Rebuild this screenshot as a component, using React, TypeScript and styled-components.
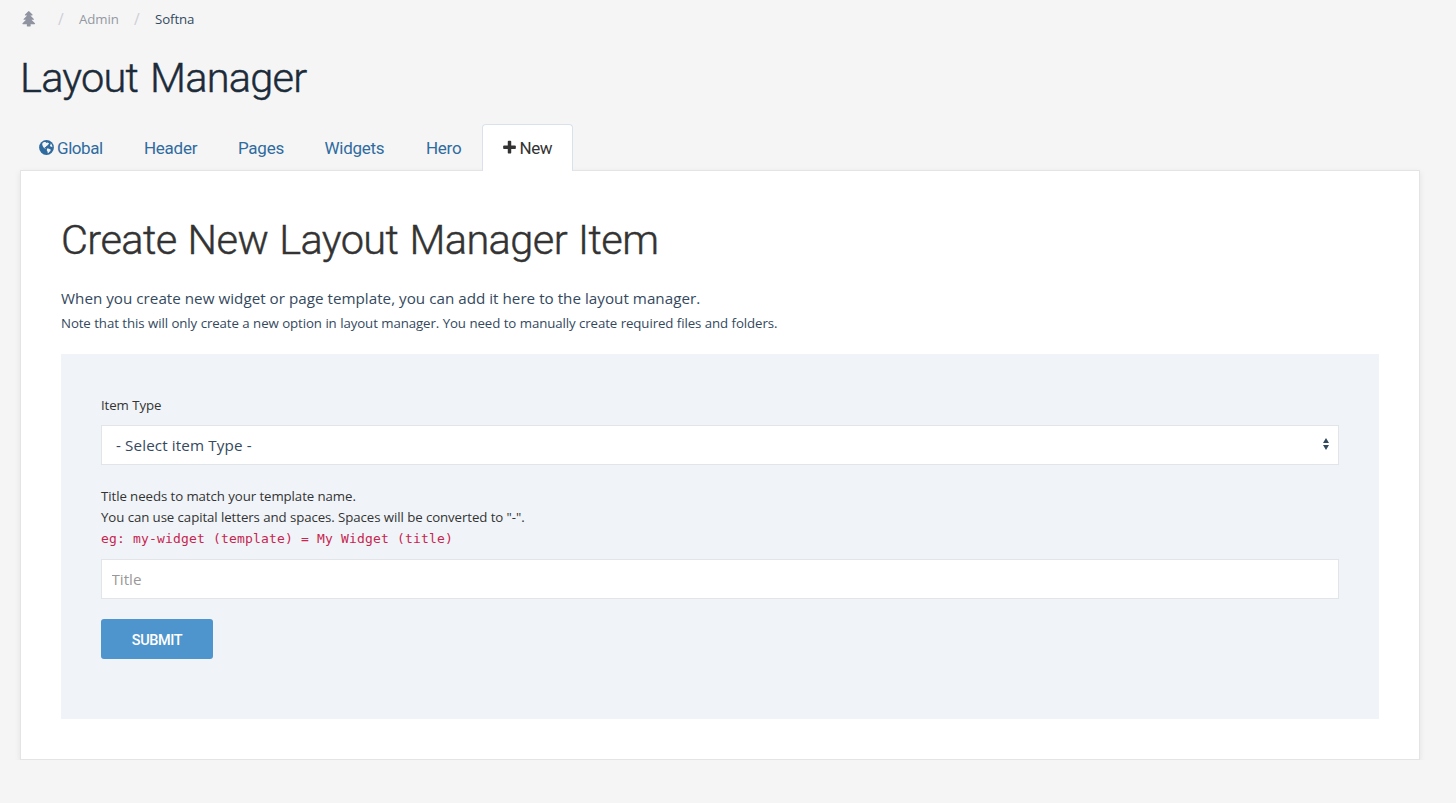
import styled, { createGlobalStyle } from "styled-components";

const bodyFont = '"Open Sans", "Noto Sans", sans-serif';
const headFont = 'Roboto, "Liberation Sans", sans-serif';

const GlobalStyle = createGlobalStyle`
  * { box-sizing: border-box; }
  html { background: #f5f5f5; }
  body { margin: 0; font-family: ${bodyFont}; font-size: 15.2px; color: #34495e; }
`;

const Page = styled.main`
  width: 1420px;
  padding: 9px 0 0 20px;
`;

const Breadcrumb = styled.nav`
  display: flex;
  height: 20px;
  line-height: 20px;
  font-size: 13.25px;
`;

const Crumb = styled.span<{ $current?: boolean; $width: number }>`
  width: ${(p) => p.$width}px;
  color: ${(p) => (p.$current ? "#34495e" : "#9498a3")};
  letter-spacing: -0.1px;
  white-space: nowrap;
`;

const Slash = styled.span`
  width: 21px;
  font-size: 15.5px;
  color: #cdd0d6;
`;

const TreeIcon = styled.svg`
  display: block;
  width: 15.5px;
  height: 15.5px;
  margin: 2px 0 0 0.7px;
  fill: #9093a0;
`;

const PageTitle = styled.h1`
  margin: 24px 0 21px;
  font: 300 41.5px/50px ${headFont};
  -webkit-text-stroke: 0.45px currentColor;
  letter-spacing: -0.75px;
  word-spacing: 2.5px;
  color: #1c2b39;
`;

const Tabs = styled.div`
  display: flex;
  height: 46px;
  margin-left: -1px;
`;

const Tab = styled.a<{ $width: number; $active?: boolean; $tight?: boolean }>`
  display: flex;
  align-items: center;
  gap: 3px;
  width: ${(p) => p.$width}px;
  height: ${(p) => (p.$active ? 47 : 46)}px;
  padding: 0 0 ${(p) => (p.$active ? 1 : 0)}px ${(p) => (p.$active ? 18.5 : p.$tight ? 19 : 20)}px;
  border: 1px solid ${(p) => (p.$active ? "#d9e2ec" : "transparent")};
  border-bottom: 0;
  border-radius: 4px 4px 0 0;
  background: ${(p) => (p.$active ? "#fff" : "transparent")};
  color: ${(p) => (p.$active ? "#333" : "#2f6b9f")};
  font: 400 17px/44px ${headFont};
  letter-spacing: ${(p) => (p.$active || p.$tight ? -0.45 : -0.26)}px;
  white-space: nowrap;
  position: relative;
`;

const TabIcon = styled.svg`
  flex: none;
  width: 15px;
  height: 15px;
  fill: currentColor;
`;

const Panel = styled.section`
  width: 1400px;
  height: 590px;
  padding: 39px 40px 40px;
  border: 1px solid #e4e4e5;
  background: #fff;
  box-shadow: 0 2px 6px rgba(0, 0, 0, 0.08);
`;

const PanelTitle = styled.h2`
  margin: 0 0 16px;
  font: 300 41.5px/60px ${headFont};
  -webkit-text-stroke: 0.45px currentColor;
  letter-spacing: -0.58px;
  word-spacing: 1.5px;
  color: #333;
`;

const Lead = styled.p`
  margin: 0;
  line-height: 24px;
  letter-spacing: 0.02px;
`;

const Note = styled.p`
  margin: 0 0 18px;
  font-size: 13.25px;
  line-height: 26px;
  letter-spacing: -0.1px;
  word-spacing: 0.2px;
`;

const Form = styled.form`
  display: flex;
  flex-direction: column;
  align-items: stretch;
  height: 365px;
  padding: 40px;
  background: #f0f3f8;
`;

const Label = styled.label`
  margin-bottom: 9px;
  font-size: 13.25px;
  line-height: 22px;
  letter-spacing: -0.08px;
  color: #333;
`;

const SelectBox = styled.div`
  display: flex;
  align-items: center;
  justify-content: space-between;
  height: 40px;
  margin-bottom: 21px;
  padding-left: 14px;
  border: 1px solid #e3e4e7;
  background: #fff;
  line-height: 38px;
  letter-spacing: 0.13px;
`;

const Arrows = styled.svg`
  width: 24px;
  height: 16px;
  fill: #34495e;
`;

const Help = styled.div`
  margin-bottom: 10px;
  font-size: 13.25px;
  line-height: 21px;
  letter-spacing: -0.08px;
  color: #333;
`;

const Example = styled.code`
  display: block;
  height: 21px;
  font: 13px/21px "DejaVu Sans Mono", monospace;
  letter-spacing: 0.174px;
  color: #c7254e;
`;

const TextInput = styled.input`
  height: 40px;
  padding: 0 9.5px;
  border: 1px solid #e3e4e7;
  border-radius: 0;
  background: #fff;
  font: 15.2px ${bodyFont};
  color: #34495e;
  &::placeholder { color: #999; opacity: 1; }
`;

const Submit = styled.button`
  align-self: flex-start;
  width: 112px;
  height: 40px;
  margin-top: 20px;
  padding: 2px 0 0;
  border: 0;
  border-radius: 3px;
  background: #4f95cd;
  color: #fff;
  font: 500 14.5px/40px ${headFont};
  letter-spacing: -0.4px;
`;

const Tree = () => (
  <TreeIcon viewBox="0 0 1792 1792">
    <path d="M1504 1472q0 26-19 45t-45 19h-462q1 17 6 87.500t5 108.500q0 25-18 42.500t-43 17.500h-320q-25 0-43-17.500t-18-42.500q0-38 5-108.500t6-87.500h-462q-26 0-45-19t-19-45 19-45l402-403h-229q-26 0-45-19t-19-45 19-45l402-403h-197q-26 0-45-19t-19-45 19-45l384-384q19-19 45-19t45 19l384 384q19 19 19 45t-19 45-45 19h-197l402 403q19 19 19 45t-19 45-45 19h-229l402 403q19 19 19 45z" transform="translate(128 0)" />
  </TreeIcon>
);

const Globe = () => (
  <TabIcon viewBox="0 0 15 15">
    <circle cx="7.5" cy="7.5" r="7.4" />
    <path
      fill="#f5f5f5"
      d="M3.500 3 5 1.900l1.600.2.6.9 1-.6 1.300.5.6.9-.9.8-.8 1-1.200.7-.4.8-1-.2-.2.7.8.5.3.6-.8-.2-1.300-1.100-.9-1.500-.5-1.300zM8 8.600l1.300-.2 1.200.7 1.200.5-.3 1.300-1.200 1.100-.7 1.100-.7.1-.3-1.600-.7-1.200zM11.400 3.600l1 .4.8 1.700.2 1.500-.9-.4-1-.2-.6-1.100.7-.8z"
    />
  </TabIcon>
);

const Plus = () => (
  <TabIcon viewBox="64 32 1664 1664">
    <path d="M1600 736v192q0 40-28 68t-68 28h-416v416q0 40-28 68t-68 28h-192q-40 0-68-28t-28-68v-416h-416q-40 0-68-28t-28-68v-192q0-40 28-68t68-28h416v-416q0-40 28-68t68-28h192q40 0 68 28t28 68v416h416q40 0 68 28t28 68z" />
  </TabIcon>
);

export default function App() {
  return (
    <>
      <GlobalStyle />
      <Page>
        <Breadcrumb>
          <Crumb $width={38}><Tree /></Crumb>
          <Slash>/</Slash>
          <Crumb $width={55}>Admin</Crumb>
          <Slash>/</Slash>
          <Crumb $width={60} $current>Softna</Crumb>
        </Breadcrumb>
        <PageTitle>Layout Manager</PageTitle>
        <Tabs>
          <Tab $width={104} $tight><Globe />Global</Tab>
          <Tab $width={94}>Header</Tab>
          <Tab $width={86.5}>Pages</Tab>
          <Tab $width={101.5}>Widgets</Tab>
          <Tab $width={77}>Hero</Tab>
          <Tab $width={91} $active><Plus />New</Tab>
        </Tabs>
        <Panel>
          <PanelTitle>Create New Layout Manager Item</PanelTitle>
          <Lead>When you create new widget or page template, you can add it here to the layout manager.</Lead>
          <Note>Note that this will only create a new option in layout manager. You need to manually create required files and folders.</Note>
          <Form>
            <Label>Item Type</Label>
            <SelectBox>
              - Select item Type -
              <Arrows viewBox="0 0 24 16">
                <path d="M12 1 9 6h6zM12 13 9 8h6z" />
              </Arrows>
            </SelectBox>
            <Help>
              Title needs to match your template name.
              <br />
              You can use capital letters and spaces. Spaces will be converted to "-".
              <Example>eg: my-widget (template) = My Widget (title)</Example>
            </Help>
            <TextInput placeholder="Title" />
            <Submit type="button">SUBMIT</Submit>
          </Form>
        </Panel>
      </Page>
    </>
  );
}
